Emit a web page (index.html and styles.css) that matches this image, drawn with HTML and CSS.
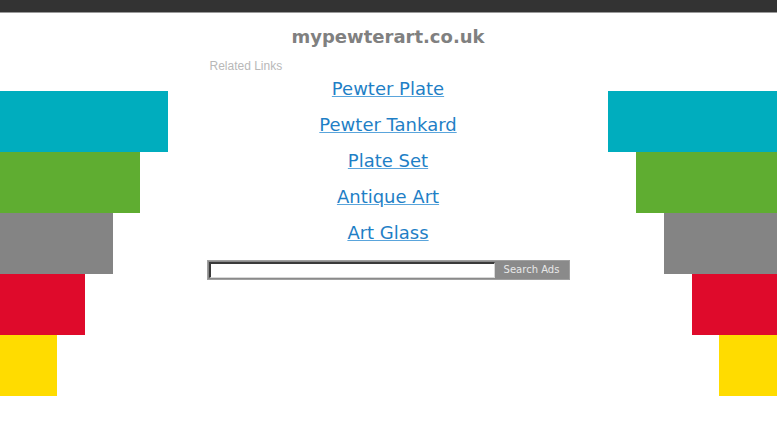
FILE: index.html
```html
<!DOCTYPE html>
<html>
<head>
<meta charset="utf-8">
<link rel="stylesheet" href="styles.css">
</head>
<body>
<div class="topbar"></div>
<div class="main">
  <div class="stripes stripes-left">
    <div class="bar cyan" style="width:168px"></div>
    <div class="bar green" style="width:140px"></div>
    <div class="bar gray" style="width:113px"></div>
    <div class="bar red" style="width:85px"></div>
    <div class="bar yellow" style="width:57px"></div>
  </div>
  <div class="center">
    <h1 class="title">mypewterart.co.uk</h1>
    <div class="content">
      <div class="related">Related Links</div>
      <ul class="links">
        <li><a href="#">Pewter Plate</a></li>
        <li><a href="#">Pewter Tankard</a></li>
        <li><a href="#">Plate Set</a></li>
        <li><a href="#">Antique Art</a></li>
        <li><a href="#">Art Glass</a></li>
      </ul>
      <form class="search">
        <input class="search-input" type="text">
        <button class="search-btn" type="button">Search Ads</button>
      </form>
    </div>
  </div>
  <div class="stripes stripes-right">
    <div class="bar cyan" style="width:169px"></div>
    <div class="bar green" style="width:141px"></div>
    <div class="bar gray" style="width:113px"></div>
    <div class="bar red" style="width:85px"></div>
    <div class="bar yellow" style="width:58px"></div>
  </div>
</div>
</body>
</html>
```
FILE: styles.css
```css
html, body {
  margin: 0;
  padding: 0;
  background: #fff;
}
body {
  font-family: "DejaVu Sans", Verdana, sans-serif;
  overflow: hidden;
}
.topbar {
  height: 12px;
  background: #333333;
  border-bottom: 1px solid #9a9a9a;
}
.main {
  display: flex;
}
.stripes {
  display: flex;
  flex-direction: column;
  padding-top: 78px;
}
.stripes-left {
  width: 168px;
  align-items: flex-start;
}
.stripes-right {
  width: 169px;
  align-items: flex-end;
}
.bar {
  height: 61px;
}
.cyan { background: #00adbe; }
.green { background: #5fad31; }
.gray { background: #848484; }
.red { background: #df0a2b; }
.yellow { background: #ffdc00; }
.center {
  flex: 1;
  display: flex;
  flex-direction: column;
  align-items: center;
}
.title {
  margin: 12px 0 0 0;
  font-size: 18px;
  font-weight: bold;
  line-height: 24px;
  color: #808080;
  text-align: center;
}
.content {
  width: 363px;
  margin-top: 9px;
}
.related {
  font-family: "Liberation Sans", Arial, sans-serif;
  font-size: 12px;
  line-height: 16px;
  color: #b8b8b8;
  padding-left: 3px;
}
.links {
  list-style: none;
  margin: 3px 0 0 0;
  padding: 0;
  display: flex;
  flex-direction: column;
  gap: 12px;
  text-align: center;
}
.links li {
  line-height: 24px;
  font-size: 18px;
}
.links a {
  color: #1f7fc6;
  text-decoration: underline;
  text-decoration-color: #5aa5dc;
}
.search {
  margin: 15px 0 0 0;
  display: flex;
  height: 20px;
  background: #8a8a8a;
  border: 1px solid #a0a0a0;
  box-sizing: border-box;
}
.search-input {
  width: 286px;
  margin: 1px 0 1px 1px;
  padding: 0;
  box-sizing: border-box;
  border-top: 2px solid #3a3a3a;
  border-left: 2px solid #3a3a3a;
  border-bottom: 1px solid #d8d8d8;
  border-right: 1px solid #d8d8d8;
  background: #fff;
  outline: none;
}
.search-btn {
  flex: 1;
  border: 0;
  padding: 0 0 1px 0;
  background: #8a8a8a;
  color: #e8e8e8;
  font-family: "DejaVu Sans", Verdana, sans-serif;
  font-size: 10px;
}
```
